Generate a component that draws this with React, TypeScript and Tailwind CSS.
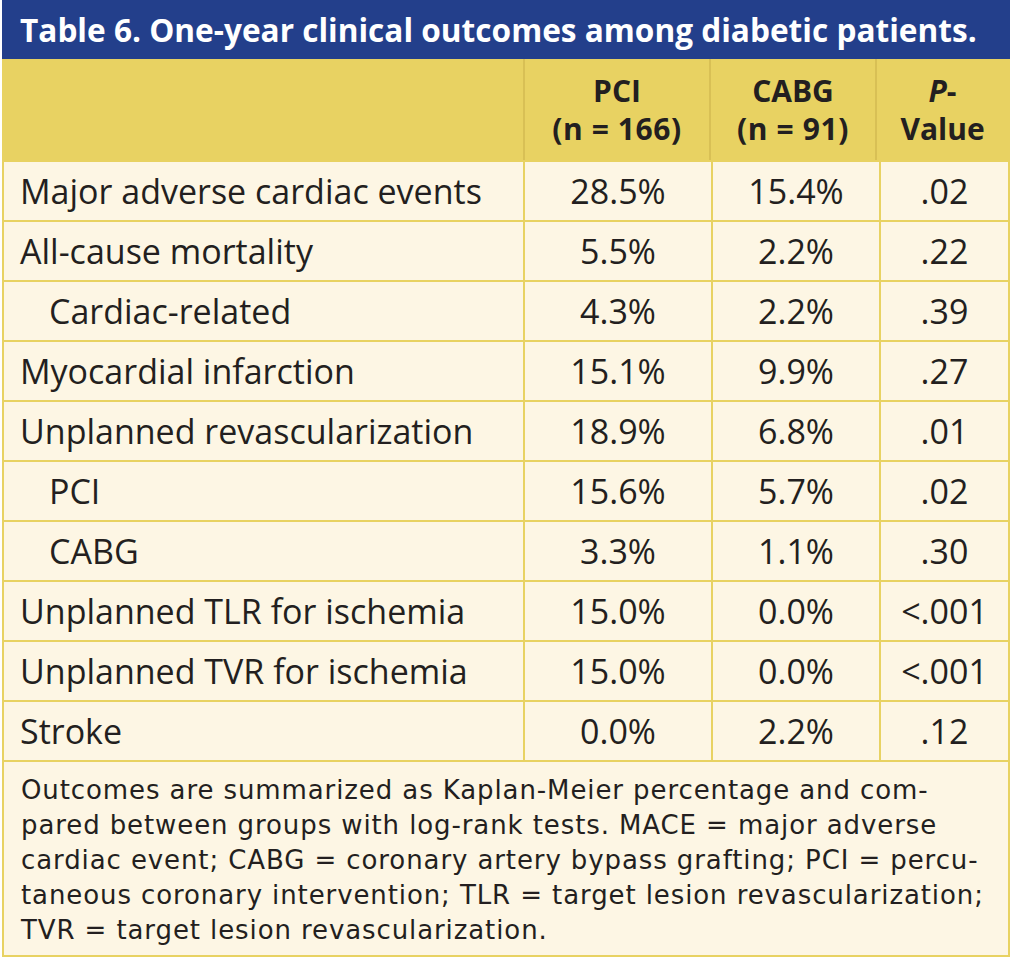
import React from "react";

const rows: [string, string, string, string, boolean][] = [
  ["Major adverse cardiac events", "28.5%", "15.4%", ".02", false],
  ["All-cause mortality", "5.5%", "2.2%", ".22", false],
  ["Cardiac-related", "4.3%", "2.2%", ".39", true],
  ["Myocardial infarction", "15.1%", "9.9%", ".27", false],
  ["Unplanned revascularization", "18.9%", "6.8%", ".01", false],
  ["PCI", "15.6%", "5.7%", ".02", true],
  ["CABG", "3.3%", "1.1%", ".30", true],
  ["Unplanned TLR for ischemia", "15.0%", "0.0%", "<.001", false],
  ["Unplanned TVR for ischemia", "15.0%", "0.0%", "<.001", false],
  ["Stroke", "0.0%", "2.2%", ".12", false],
];

export default function App() {
  return (
    <div
      className="w-[1012px] h-[959px] bg-white px-[2px] text-[#231f20]"
      style={{ fontFamily: '"Open Sans", "Liberation Sans", sans-serif' }}
    >
      <div className="h-[59px] bg-[#233f8b] flex items-center pl-[18px] text-white font-bold text-[31.6px] leading-none">
        Table 6. One-year clinical outcomes among diabetic patients.
      </div>
      <div className="bg-[#e8d262] px-[2px] pb-[2px] flex flex-col gap-[2px]">
        <div className="grid grid-cols-[519px_186px_166px_1fr] h-[101px] font-bold text-[30px] leading-[38px] text-center">
          <div />
          <div className="border-l-2 border-[#d8c055] flex flex-col items-center justify-center">
            <span>PCI</span>
            <span className="tracking-[0.6px]">(n = 166)</span>
          </div>
          <div className="border-l-2 border-[#d8c055] flex flex-col items-center justify-center">
            <span>CABG</span>
            <span className="tracking-[0.6px]">(n = 91)</span>
          </div>
          <div className="border-l-2 border-[#d8c055] flex flex-col items-center justify-center">
            <span>
              <i>P</i>-
            </span>
            <span>Value</span>
          </div>
        </div>
        {rows.map(([label, a, b, p, indent]) => (
          <div
            key={label + a}
            className="grid grid-cols-[519px_186px_166px_1fr] gap-x-[2px] h-[58px] text-[34px]"
          >
            <div className={`bg-[#fdf6e4] flex items-center ${indent ? "pl-[45px]" : "pl-[16px]"}`}>
              {label}
            </div>
            <div className="bg-[#fdf6e4] flex items-center justify-center">{a}</div>
            <div className="bg-[#fdf6e4] flex items-center justify-center">{b}</div>
            <div className="bg-[#fdf6e4] flex items-center justify-center">{p}</div>
          </div>
        ))}
        <div
          className="bg-[#fdf6e4] h-[193px] pl-[17px] pt-[11px] text-[26px] leading-[35px] tracking-[0.9px] whitespace-nowrap"
          style={{ fontFamily: '"DejaVu Sans", sans-serif' }}
        >
          Outcomes are summarized as Kaplan-Meier percentage and com-
          <br />
          pared between groups with log-rank tests. MACE = major adverse
          <br />
          cardiac event; CABG = coronary artery bypass grafting; PCI = percu-
          <br />
          taneous coronary intervention; TLR = target lesion revascularization;
          <br />
          TVR = target lesion revascularization.
        </div>
      </div>
    </div>
  );
}
